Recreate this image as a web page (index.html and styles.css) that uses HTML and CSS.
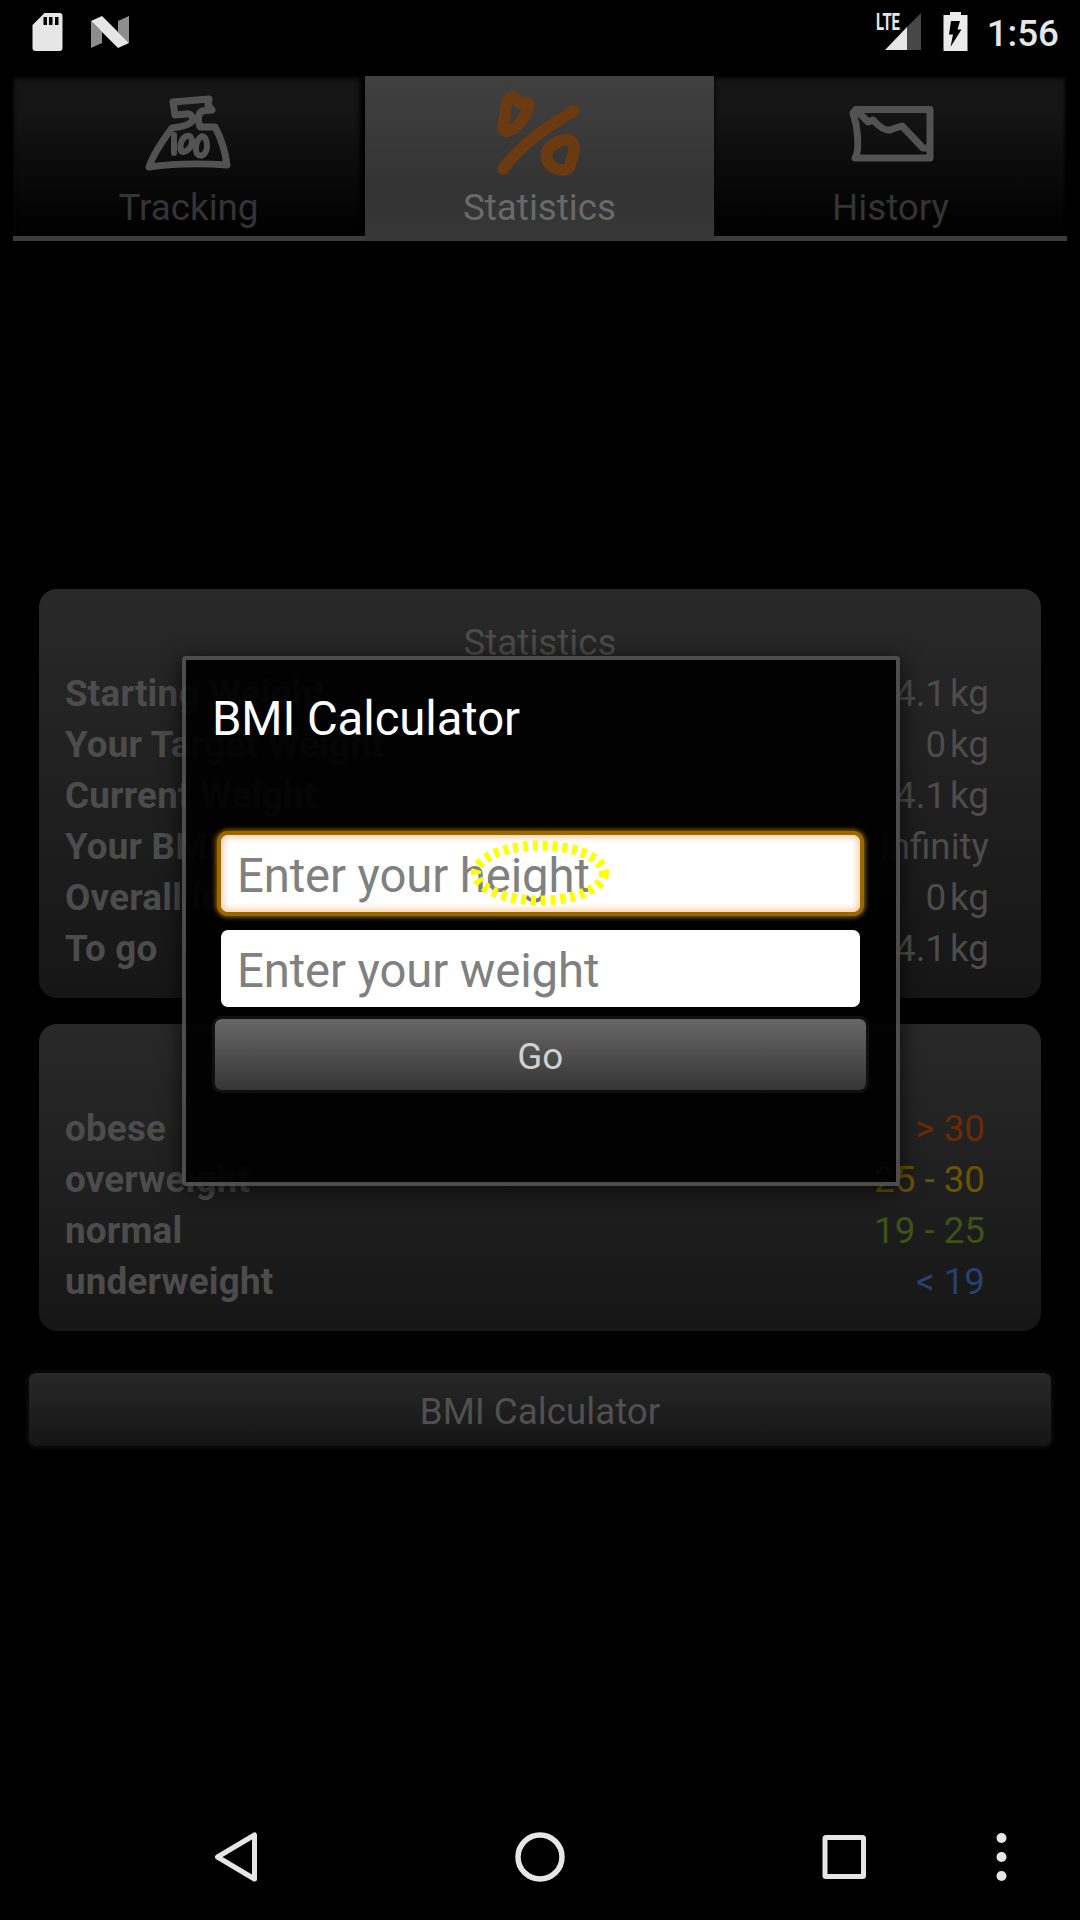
FILE: index.html
```html
<!DOCTYPE html>
<html lang="en">
<head>
<meta charset="utf-8">
<title>BMI Calculator</title>
<link rel="stylesheet" href="styles.css">
</head>
<body>
<div class="screen">
  <header class="status">
    <div class="status-left">
      <svg width="32" height="40" viewBox="0 0 32 40"><path fill="#e6e6e6" d="M12.500 1h15a3 3 0 0 1 3 3v32a3 3 0 0 1-3 3h-24a3 3 0 0 1-3-3V13z"/><path d="M11.500 5H15v8h-3.500zM17 5h3.500v8H17zM23 5h3.500v8H23z"/></svg>
      <svg width="40" height="32" viewBox="0 0 40 32"><path fill="#8d8d8d" d="M0 5l11 11v11L0 32zM27 5l11-5v27L27 16z"/><path fill="#e6e6e6" d="M0 5l11-5 27 27-11 5z"/></svg>
    </div>
    <div class="status-right">
      <svg class="signal" width="46" height="40" viewBox="0 0 46 40"><path fill="#474747" d="M45 1v37H31V15z"/><path fill="#e6e6e6" d="M31 15v23H9z"/><text class="lte" x="0" y="17.500" textLength="24" lengthAdjust="spacingAndGlyphs">LTE</text></svg>
      <svg class="battery" width="25" height="40" viewBox="0 0 25 40"><path fill="#ebebeb" d="M7 0h11v3h6.500v36H.500V3H7z"/><path d="M8 9h9l-2.500 8.500h4L7.500 35l2.500-12.500H6z"/></svg>
      <span class="clock">1:56</span>
    </div>
  </header>

  <nav class="tabs">
    <div class="tab">
      <svg class="doodle" width="98" height="100" viewBox="0 0 98 100"><path d="M9 82Q14 67 32 43 50 41 53 35 52 28 46 29L35 30 33 17 69 14 68 20 72 25 62 26Q56 30 60 42L75 42Q84 58 87 80 45 77 9 82z"/><path class="fine" d="M34 50V68M47 51C42 52 39 60 41 66 45 69 52 63 52 56 52 52 50 50 47 51zM62 51C57 54 54 62 57 69 61 73 67 69 67 61 67 55 65 50 61 52z"/></svg>
      <span>Tracking</span>
    </div>
    <div class="tab active">
      <svg class="doodle percent" width="100" height="100" viewBox="0 0 100 100"><path d="M24 13Q17 11 16 22L13 42Q14 50 25 43 35 34 39 21 38 16 33 18 29 20 25 13M13 84Q35 54 84 26M74 55Q58 58 56 71 59 84 72 85 80 86 81 76 86 64 83 58 79 53 70 56 67 58 65 59"/></svg>
      <span>Statistics</span>
    </div>
    <div class="tab">
      <svg class="doodle" width="100" height="100" viewBox="0 0 100 100"><path d="M15 24.500H89V73H14Q19 65 15 39L12 28 15 24.500 27 37 32 35Q42 46 49 45 54 43 61 41L82 63H87"/></svg>
      <span>History</span>
    </div>
  </nav>

  <main class="content">
    <section class="card">
      <h2>Statistics</h2>
      <div class="row"><b>Starting Weight</b><span>4.1<i>kg</i></span></div>
      <div class="row"><b>Your Target Weight</b><span>0<i>kg</i></span></div>
      <div class="row"><b>Current Weight</b><span>4.1<i>kg</i></span></div>
      <div class="row"><b>Your BMI</b><span>Infinity</span></div>
      <div class="row"><b>Overall loss</b><span>0<i>kg</i></span></div>
      <div class="row"><b>To go</b><span>4.1<i>kg</i></span></div>
    </section>
    <section class="card ranges">
      <div class="row"><b>obese</b><span class="red">&gt; 30</span></div>
      <div class="row"><b>overweight</b><span class="yellow">25 - 30</span></div>
      <div class="row"><b>normal</b><span class="green">19 - 25</span></div>
      <div class="row"><b>underweight</b><span class="blue">&lt; 19</span></div>
    </section>
    <div class="button dim">BMI Calculator</div>
  </main>

  <footer class="navbar">
    <svg width="1080" height="120" viewBox="0 0 1080 120" fill="none" stroke="#e6e6e6"><path stroke-width="5" stroke-linejoin="round" d="M254.500 35v44L217.500 57z"/><circle cx="540" cy="57" r="22" stroke-width="5.500"/><rect x="825" y="37.500" width="38.500" height="39" rx="1" stroke-width="5"/><g fill="#e6e6e6" stroke="none"><circle cx="1001.500" cy="38" r="5"/><circle cx="1001.500" cy="57" r="5"/><circle cx="1001.500" cy="76" r="5"/></g></svg>
  </footer>

  <div class="dialog">
    <h1>BMI Calculator</h1>
    <div class="field focused">Enter your height
      <svg class="touch" width="140" height="66" viewBox="0 0 140 66"><ellipse cx="70" cy="33" rx="64" ry="27.500" fill="none" stroke="#ff0" stroke-width="10" stroke-dasharray="5 4.850"/></svg>
    </div>
    <div class="field">Enter your weight</div>
    <div class="button go">Go</div>
  </div>
</div>
</body>
</html>
```
FILE: styles.css
```css
* { box-sizing: border-box; }
body { margin: 0; background: #000; font-family: Roboto, sans-serif; font-size: 36.75px; }
h1, h2 { margin: 0; font-weight: 400; }
svg { display: block; flex: none; }

.screen { position: relative; width: 1080px; height: 1920px; display: flex; flex-direction: column; background: #000; overflow: hidden; }

.status { height: 76px; padding: 12px 21px 0 32px; display: flex; justify-content: space-between; }
.status-left { display: flex; gap: 27px; align-items: flex-start; }
.status-left svg + svg { margin-top: 4px; }
.status-right { display: flex; color: #e6e6e6; }
.signal { overflow: visible; }
.battery { margin: 0 19px 0 21px; }
.lte { font: 700 23px Roboto, sans-serif; fill: #e6e6e6; }
.clock { font-weight: 500; line-height: 43px; }

.tabs { height: 166px; margin: 0 13px; display: grid; grid-template-columns: 352px 349px 353px; background: linear-gradient(#3c3c3c, #3c3c3c) 0 160px / 100% 5px no-repeat; }
.tab { height: 160px; display: flex; flex-direction: column; align-items: center; gap: 1px; padding-top: 9px; color: #343434; background: linear-gradient(#151515 20%, #000); box-shadow: inset -2px 0 3px #000, inset 1px 3px 4px #080808; }
.tab:first-child { padding-right: 1px; box-shadow: inset -5px 0 4px #000, inset 1px 3px 4px #080808; }
.tab.active { height: 165px; color: #696969; background: linear-gradient(#404040, #333 70%, #373737); box-shadow: none; }
.tab span { line-height: 43px; }
.doodle { fill: none; stroke: #525252; stroke-width: 7; stroke-linecap: round; stroke-linejoin: round; }
.doodle .fine { stroke-width: 6; }
.doodle.percent { stroke: #6b3a10; stroke-width: 11.500; }

.content { height: 1558px; padding: 347px 26px 0; }
.card { margin: 0 13px 26px; padding: 28px 52px 24px 26px; border-radius: 18px; background: linear-gradient(#292929, #161616); color: #4c4c4c; line-height: 51px; }
.card h2 { font-size: inherit; margin-right: -26px; text-align: center; }
.card.ranges { padding: 79px 56px 24px 26px; margin-bottom: 39px; }
.row { height: 51px; display: flex; justify-content: space-between; }
.row b { letter-spacing: .22px; }
.row i { font-style: normal; margin-left: 4px; }
.red { color: #6b2a05; }
.yellow { color: #6b5300; }
.green { color: #3d5216; }
.blue { color: #28406f; }

.button { height: 79px; padding-top: 4px; border: 3px solid #070707; border-radius: 9px; display: flex; align-items: center; justify-content: center; }
.button.dim { color: #505050; background: linear-gradient(#282828, #151515) padding-box; }
.button.go { height: 77px; margin: 9px 27px 0 26.500px; color: #d0d0d0; border-color: #101010; background: linear-gradient(#676767, #353535) padding-box; }

.navbar { height: 120px; }

/* Modal floating over the dimmed activity */
.dialog { position: absolute; left: 181.500px; top: 656px; width: 718px; height: 530px; border: 4px solid rgba(80, 80, 80, .92); border-radius: 4px; background: rgba(0, 0, 0, .93) padding-box; box-shadow: 0 4px 22px rgba(0, 0, 0, .75); }
.dialog h1 { margin: 32px 0 0 26.500px; font-size: 47.250px; line-height: 55px; letter-spacing: -.08px; color: #fff; }
.field { position: relative; height: 77px; margin: 18px 35.500px 0; padding-left: 16px; border-radius: 7px; background: #fff; color: #808080; font-size: 47.250px; line-height: 83px; letter-spacing: -.1px; }
.field.focused { margin-top: 88px; box-shadow: 0 0 0 4px #9b6800, 0 0 5px 5px #9b6800, inset 0 0 7px 2px #f2c7a0; }
.touch { position: absolute; left: 248.500px; top: 5px; }
```
